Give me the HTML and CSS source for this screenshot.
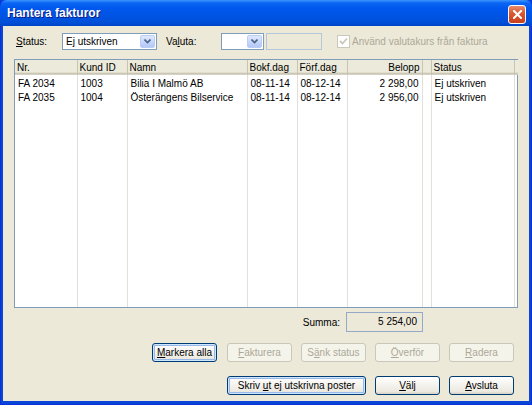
FILE: index.html
```html
<!DOCTYPE html>
<html lang="sv">
<head>
  <meta charset="UTF-8">
  <title>Hantera fakturor</title>
  <link rel="stylesheet" href="styles.css">
</head>
<body>

<div class="window">
  <div class="titlebar">
    <span class="title">Hantera fakturor</span>
    <span class="close">
      <svg width="9" height="9" viewBox="0 0 9 9"><path d="M1 1L8 8M8 1L1 8" stroke="#fff" stroke-width="2" stroke-linecap="square"/></svg>
    </span>
  </div>

  <div class="client">
    <div class="filters">
      <label class="lbl lbl-status"><u>S</u>tatus:</label>
      <div class="combo combo-status">
        <span class="combo-text">Ej utskriven</span>
        <span class="drop"><svg width="7" height="5" viewBox="0 0 7 5"><polyline points="0.5,0.5 3.5,3.5 6.5,0.5" fill="none" stroke="#4d6185" stroke-width="1.6"/></svg></span>
      </div>
      <label class="lbl lbl-valuta">Va<u>l</u>uta:</label>
      <div class="combo combo-valuta">
        <span class="combo-text"></span>
        <span class="drop"><svg width="7" height="5" viewBox="0 0 7 5"><polyline points="0.5,0.5 3.5,3.5 6.5,0.5" fill="none" stroke="#4d6185" stroke-width="1.6"/></svg></span>
      </div>
      <div class="textbox"></div>
      <span class="check">
        <svg width="9" height="9" viewBox="0 0 9 9"><polyline points="1,4 3.5,6.5 8,1.5" fill="none" stroke="#cac8bb" stroke-width="1.8"/></svg>
      </span>
      <span class="check-label">Använd valutakurs från faktura</span>
    </div>

    <div class="list">
      <table class="grid">
        <colgroup>
          <col style="width:62px">
          <col style="width:50px">
          <col style="width:120px">
          <col style="width:50px">
          <col style="width:50px">
          <col style="width:75px">
          <col style="width:9px">
          <col style="width:83px">
          <col style="width:4px">
        </colgroup>
        <thead>
          <tr>
            <th>Nr.</th>
            <th>Kund ID</th>
            <th>Namn</th>
            <th>Bokf.dag</th>
            <th>Förf.dag</th>
            <th class="num">Belopp</th>
            <th></th>
            <th>Status</th>
            <th class="rest"></th>
          </tr>
        </thead>
        <tbody>
          <tr class="row">
            <td>FA 2034</td>
            <td>1003</td>
            <td>Bilia I Malmö AB</td>
            <td>08-11-14</td>
            <td>08-12-14</td>
            <td class="num">2 298,00</td>
            <td></td>
            <td>Ej utskriven</td>
            <td class="rest"></td>
          </tr>
          <tr class="row">
            <td>FA 2035</td>
            <td>1004</td>
            <td>Österängens Bilservice</td>
            <td>08-11-14</td>
            <td>08-12-14</td>
            <td class="num">2 956,00</td>
            <td></td>
            <td>Ej utskriven</td>
            <td class="rest"></td>
          </tr>
          <tr class="filler">
            <td></td><td></td><td></td><td></td><td></td><td></td><td></td><td></td><td class="rest"></td>
          </tr>
        </tbody>
      </table>
    </div>

    <div class="summary">
      <span class="sum-label">Summa:</span>
      <div class="sum-box">5 254,00</div>
    </div>

    <div class="buttons">
      <button class="btn default first"><u>M</u>arkera alla</button>
      <button class="btn" disabled><u>F</u>akturera</button>
      <button class="btn" disabled>S<u>ä</u>nk status</button>
      <button class="btn" disabled><u>Ö</u>verför</button>
      <button class="btn" disabled><u>R</u>adera</button>
    </div>

    <div class="buttons bottom">
      <button class="btn default wide">Skriv <u>u</u>t ej utskrivna poster</button>
      <button class="btn"><u>V</u>älj</button>
      <button class="btn"><u>A</u>vsluta</button>
    </div>
  </div>
</div>

</body>
</html>
```

FILE: styles.css
```css
* {
  box-sizing: border-box;
}

body {
  margin: 0;
  font-family: "Liberation Sans", Arial, sans-serif;
  font-size: 10px;
  color: #000;
}

.window {
  width: 532px;
  height: 405px;
  display: flex;
  flex-direction: column;
  background: #0a45d8;
  box-shadow: inset 1px 0 #0831d9, inset -1px 0 #0831d9, inset 0 -1px #0831d9;
}

.titlebar {
  height: 26px;
  flex: none;
  display: flex;
  align-items: center;
  padding: 0 6px 0 7px;
  background: linear-gradient(to bottom, #3d95ff 0, #0a66f4 3px, #0058ee 8px, #0054e3 16px, #0050d8 22px, #0046c8 26px);
  border-radius: 7px 7px 0 0;
}

.title {
  flex: 1;
  color: #fff;
  font-weight: bold;
  font-size: 12px;
  text-shadow: 1px 1px #0a1883;
}

.close {
  width: 18px;
  height: 19px;
  margin-top: 3px;
  display: flex;
  align-items: center;
  justify-content: center;
  border: 1px solid #fff;
  border-radius: 3px;
  background: linear-gradient(to bottom, #e78a6c, #d8562f 45%, #c9401c);
}

.client {
  flex: 1;
  margin: 0 3px 4px;
  background: #ece9d8;
  padding: 7px 11px 0;
  display: flex;
  flex-direction: column;
}

/* filter row */
.filters {
  height: 17px;
  display: flex;
  align-items: center;
}

.lbl {
  height: 17px;
  line-height: 17px;
}

.lbl-status {
  width: 48px;
  padding-left: 2px;
}

.lbl-valuta {
  width: 55px;
  margin-left: 9px;
}

.combo {
  height: 17px;
  display: flex;
  align-items: center;
  justify-content: space-between;
  border: 1px solid #7f9db9;
  background: #fff;
  padding: 0 1px 0 3px;
}

.combo-status {
  width: 95px;
}

.combo-valuta {
  width: 43px;
}

.drop {
  width: 15px;
  height: 13px;
  display: flex;
  align-items: center;
  justify-content: center;
  border: 1px solid #b9cdf5;
  border-radius: 2px;
  background: linear-gradient(to bottom, #e1eafe, #c2d4fb 60%, #b3c8f7);
}

.textbox {
  width: 56px;
  height: 17px;
  margin-left: 2px;
  border: 1px solid #b6c6dc;
  background: #ece9d8;
}

.check {
  width: 13px;
  height: 13px;
  margin-left: 15px;
  display: flex;
  align-items: center;
  justify-content: center;
  border: 1px solid #cac8bb;
  background: #fff;
}

.check-label {
  margin-left: 2px;
  color: #aca899;
}

/* list view */
.list {
  height: 249px;
  margin-top: 9px;
  border: 1px solid #7f9db9;
  background: #fff;
}

.grid {
  width: 503px;
  height: 247px;
  table-layout: fixed;
  border-collapse: collapse;
}

.grid th {
  height: 15px;
  padding: 0 0 1px 2px;
  font-weight: normal;
  text-align: left;
  white-space: nowrap;
  overflow: hidden;
  background: linear-gradient(to bottom, #ebeadb 0, #ebeadb 12px, #e2decd 12px, #e2decd 13px, #cbc7b8 13px, #cbc7b8 14px, #d6d2c2 14px);
  border-right: 1px solid #c7c5b2;
}

.grid th.num {
  text-align: right;
  padding-right: 2px;
}

.grid th.rest {
  border-right: none;
}

.grid td {
  height: 15px;
  padding: 0 0 0 3px;
  white-space: nowrap;
  overflow: hidden;
  border-right: 1px solid #e2e0d9;
}

.grid td.num {
  text-align: right;
  padding-right: 3px;
}

.grid td.rest {
  border-right: none;
}

.grid tr.row:first-child td {
  padding-top: 1px;
}

.grid tr.filler td {
  height: auto;
}

/* sum */
.summary {
  height: 20px;
  margin-top: 4px;
  display: flex;
  align-items: center;
  justify-content: flex-end;
  padding-right: 95px;
}

.sum-box {
  width: 77px;
  height: 20px;
  line-height: 18px;
  margin-left: 6px;
  padding-right: 5px;
  text-align: right;
  border: 1px solid #94a9c6;
  background: #ece9d8;
}

/* buttons */
.buttons {
  height: 19px;
  margin-top: 11px;
  display: flex;
  justify-content: flex-end;
  gap: 9px;
  padding-right: 4px;
}

.buttons.bottom {
  margin-top: 14px;
}

.btn {
  width: 65px;
  height: 19px;
  padding: 0;
  font-family: "Liberation Sans", Arial, sans-serif;
  font-size: 10px;
  color: #000;
  border: 1px solid #003c74;
  border-radius: 3px;
  background: linear-gradient(to bottom, #ffffff 0, #f6f5f0 40%, #ece9e0 85%, #d6d0c5 100%);
}

.btn.first {
  margin-right: 1px;
}

.btn.wide {
  width: 139px;
}

.btn.default {
  box-shadow: inset 0 0 0 1px #cee7ff, inset 0 0 0 2px #98b8ea;
}

.btn:disabled {
  color: #aca899;
  border-color: #c9c7ba;
  background: #f5f4ea;
}
```
